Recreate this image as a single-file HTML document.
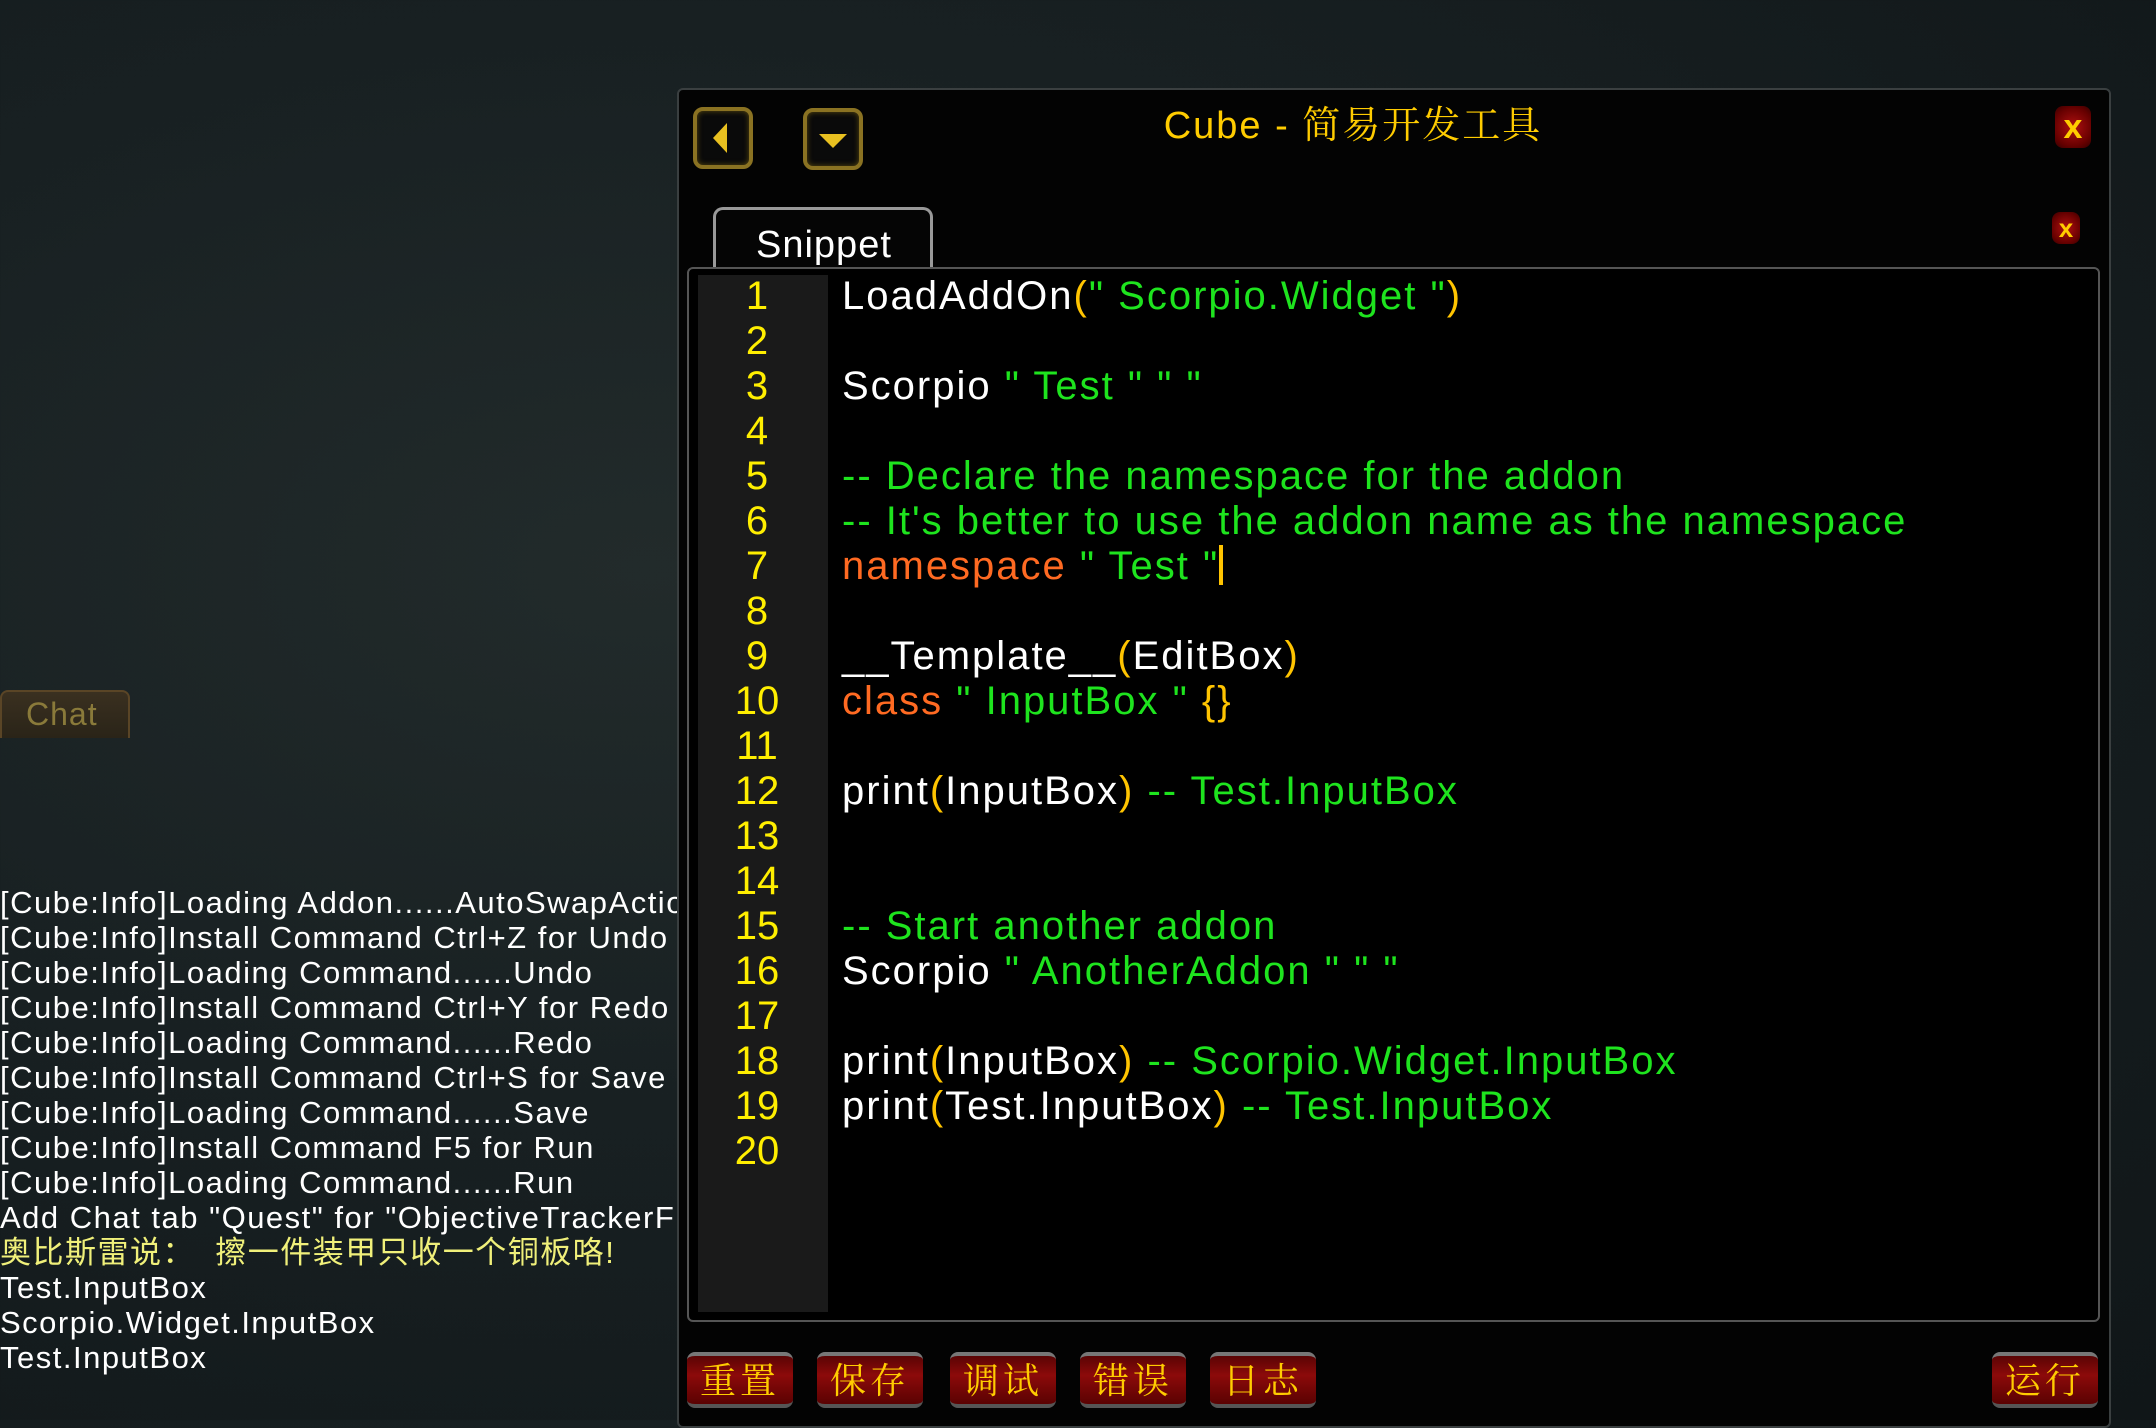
<!DOCTYPE html>
<html><head><meta charset="utf-8"><style>
*{margin:0;padding:0;box-sizing:border-box}
body{width:2156px;height:1420px;overflow:hidden;position:relative;font-family:"Liberation Sans","Noto Sans CJK SC",sans-serif;
background:radial-gradient(ellipse at 30% 40%,#222b2b 0%,#182022 45%,#101618 100%);}
.abs{position:absolute}
#panel{left:677px;top:88px;width:1434px;height:1340px;background:#030303;border:2px solid #3a3f40;border-radius:6px}
.title{left:0;width:2156px;top:94px;text-align:center;color:#ffcc00;font-size:38px;padding-left:550px;font-family:"Liberation Sans","Noto Serif CJK SC",serif;letter-spacing:2px}
.navbtn{width:60px;height:62px;border:4px solid #8a7222;border-radius:10px;background:#0a0a0a;box-shadow:inset 0 0 6px #5a4a10}
.xbtn{background:radial-gradient(circle,#b01010 0%,#600 70%,#300 100%);border-radius:8px;color:#ffcc00;font-weight:bold;text-align:center}
.tab{left:713px;top:207px;width:220px;height:60px;border:3px solid #999;border-bottom:none;border-radius:10px 10px 0 0;background:#050505;color:#fff;font-size:38px;padding:14px 0 0 40px;letter-spacing:1px}
#editor{left:687px;top:267px;width:1413px;height:1055px;border:2px solid #555;border-radius:6px;background:#000}
#gutter{left:698px;top:275px;width:130px;height:1037px;background:#1a1a1a}
.ln{left:698px;width:118px;text-align:center;color:#ffee00;font-size:40px;line-height:45px;top:274px}
.code{left:842px;top:274px;color:#fff;font-size:40px;line-height:45px;white-space:pre;letter-spacing:2px}
.g{color:#1ee41e}.o{color:#ff6a22}.y{color:#ffc400}
.btn{top:1352px;height:56px;width:106px;border-radius:8px;background:linear-gradient(#5a0404,#8c0a0a 40%,#5a0202);border-top:4px solid #777;border-bottom:4px solid #555;color:#ffcc00;font-size:36px;text-align:center;line-height:46px;font-family:"Noto Serif CJK SC",serif;letter-spacing:4px}
.chat{left:0;top:885px;color:#fff;font-size:31px;line-height:35px;white-space:pre;width:678px;overflow:hidden;letter-spacing:1.5px}
</style></head><body>
<div class="abs" style="left:0;top:690px;width:130px;height:48px;background:linear-gradient(#3a3020,#2a2418);border:2px solid #5a4526;border-bottom:none;border-radius:8px 8px 0 0;color:#8a7a3a;font-size:32px;padding:4px 0 0 24px;letter-spacing:1px">Chat</div>
<div class="abs chat">[Cube:Info]Loading Addon......AutoSwapActionBar
[Cube:Info]Install Command Ctrl+Z for Undo
[Cube:Info]Loading Command......Undo
[Cube:Info]Install Command Ctrl+Y for Redo
[Cube:Info]Loading Command......Redo
[Cube:Info]Install Command Ctrl+S for Save
[Cube:Info]Loading Command......Save
[Cube:Info]Install Command F5 for Run
[Cube:Info]Loading Command......Run
Add Chat tab "Quest" for "ObjectiveTrackerFrame"
<span style="color:#f0f07a">奥比斯雷说：  擦一件装甲只收一个铜板咯!</span>
Test.InputBox
Scorpio.Widget.InputBox
Test.InputBox</div>
<div id="panel" class="abs"></div>
<div class="abs title">Cube - 简易开发工具</div>
<div class="abs navbtn" style="left:693px;top:107px"><svg width="52" height="54" style="display:block"><polygon points="30,12 30,42 16,27" fill="#e8c020"/></svg></div>
<div class="abs navbtn" style="left:803px;top:108px"><svg width="52" height="54" style="display:block"><polygon points="12,22 40,22 26,36" fill="#e8c020"/></svg></div>
<div class="abs xbtn" style="left:2055px;top:106px;width:36px;height:42px;font-size:34px;line-height:42px">x</div>
<div class="abs tab">Snippet</div>
<div class="abs xbtn" style="left:2052px;top:212px;width:28px;height:32px;font-size:26px;line-height:32px">x</div>
<div id="editor" class="abs"></div>
<div id="gutter" class="abs"></div>
<div class="abs ln">1<br>2<br>3<br>4<br>5<br>6<br>7<br>8<br>9<br>10<br>11<br>12<br>13<br>14<br>15<br>16<br>17<br>18<br>19<br>20</div>
<div class="abs code">LoadAddOn<span class="y">(</span><span class="g">" Scorpio.Widget "</span><span class="y">)</span>

Scorpio <span class="g">" Test "</span> <span class="g">" "</span>

<span class="g">-- Declare the namespace for the addon</span>
<span class="g">-- It's better to use the addon name as the namespace</span>
<span class="o">namespace</span> <span class="g">" Test "</span><span style="display:inline-block;width:4px;height:40px;background:#ffc400;vertical-align:-6px"></span>

__Template__<span class="y">(</span>EditBox<span class="y">)</span>
<span class="o">class</span> <span class="g">" InputBox "</span> <span class="y">{}</span>

print<span class="y">(</span>InputBox<span class="y">)</span> <span class="g">-- Test.InputBox</span>


<span class="g">-- Start another addon</span>
Scorpio <span class="g">" AnotherAddon "</span> <span class="g">" "</span>

print<span class="y">(</span>InputBox<span class="y">)</span> <span class="g">-- Scorpio.Widget.InputBox</span>
print<span class="y">(</span>Test.InputBox<span class="y">)</span> <span class="g">-- Test.InputBox</span></div>
<div class="abs btn" style="left:687px">重置</div>
<div class="abs btn" style="left:817px">保存</div>
<div class="abs btn" style="left:950px">调试</div>
<div class="abs btn" style="left:1080px">错误</div>
<div class="abs btn" style="left:1210px">日志</div>
<div class="abs btn" style="left:1992px">运行</div>
</body></html>
